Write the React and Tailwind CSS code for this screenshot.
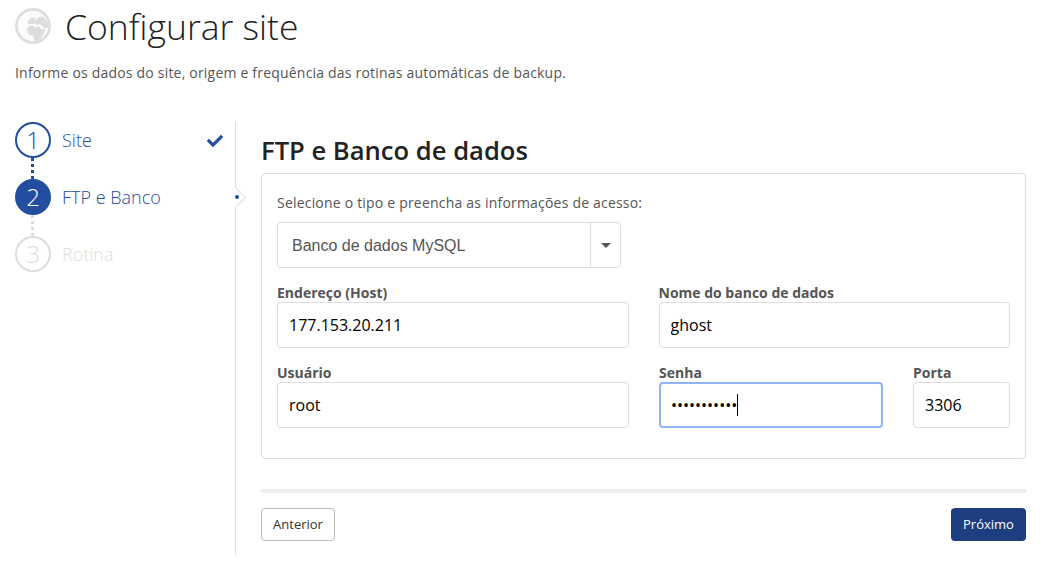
import React from 'react';
import { FaCheck } from 'react-icons/fa';

const steps = [
  { number: 1, label: 'Site', state: 'done' },
  { number: 2, label: 'FTP e Banco', state: 'active' },
  { number: 3, label: 'Rotina', state: 'todo' },
];

const GlobeIcon = () => (
  <svg viewBox="0 0 36 36" className="h-9 w-9 shrink-0">
    <circle cx="18" cy="18" r="16.6" fill="#fbfbfb" stroke="#dddddd" strokeWidth="2.6" />
    <g fill="#dddddd" stroke="#dddddd" strokeWidth="1" strokeLinejoin="round">
      <path d="M13 13 L17 10 L20 10.5 L18 12.5 L21 13 L24 9.5 L28 9 L32 14 L33 19 L30 20 L27 17 L24 15.5 L22 16.5 L20 15 L16 15.5 L13.5 16 Z" />
      <path d="M12 21.5 L14.5 18.5 L18 18.5 L21 20 L24 19 L26 21.5 L30 22 L27.5 26.5 L26 30 L22 32.5 L20 32.5 L18.5 27 L14 26 Z" />
    </g>
  </svg>
);

const Step = ({ step, isLast }) => {
  const circle =
    step.state === 'active'
      ? 'bg-[#234ea0] border-[#234ea0] text-white'
      : step.state === 'done'
        ? 'bg-white border-[#234ea0] text-[#234ea0]'
        : 'bg-white border-[#dddddd] text-[#dddddd]';
  const label = step.state === 'todo' ? 'text-[#dddddd]' : 'text-[#234ea0]';
  const line = step.state === 'done' ? 'border-[#234ea0]' : 'border-[#dddddd]';

  return (
    <div className="relative flex h-[57px] items-start">
      <div className={`flex h-9 w-9 shrink-0 items-center justify-center rounded-full border-2 text-2xl font-light ${circle}`}>
        {step.number}
      </div>
      <span className={`ml-[11px] mt-[6px] text-[18px] leading-6 font-light ${label}`}>{step.label}</span>
      {step.state === 'done' && <FaCheck className="absolute left-[192px] top-[11px] text-[16px] text-[#234ea0]" />}
      {!isLast && <div className={`absolute left-[16px] top-9 h-[21px] border-l-[3px] border-dotted ${line}`}></div>}
    </div>
  );
};

const Field = ({ label, value, type = 'text', className = '', focused = false }) => (
  <div className={className}>
    <label className="block h-[19px] text-[14px] leading-[19px] font-bold text-[#555555]">{label}</label>
    <div className="relative">
      <input
        type={type}
        value={value}
        readOnly
        className={`h-[46px] w-full rounded bg-white text-[16px] text-black outline-none ${focused ? 'border-2 border-[#8fb5f3] px-[10px]' : 'border border-[#dddddd] px-[11px]'}`}
      />
      {focused && <span className="absolute left-[78px] top-[12px] h-[22px] w-px bg-black"></span>}
    </div>
  </div>
);

export default function App() {
  return (
    <div className="h-[568px] w-[1053px] overflow-hidden bg-white font-['Open_Sans',sans-serif] text-[#444444]">
      <header className="px-[15px] pt-2">
        <div className="flex h-9 items-center">
          <GlobeIcon />
          <h1 className="ml-[14px] text-[35.5px] leading-9 font-light text-[#222222]">Configurar site</h1>
        </div>
        <p className="mt-[19px] text-[14px] leading-5 tracking-[0.2px] text-[#555555]">
          Informe os dados do site, origem e frequência das rotinas automáticas de backup.
        </p>
      </header>

      <div className="mt-[39px] flex px-[15px]">
        <aside className="relative h-[433px] w-[221px] border-r border-[#dddddd]">
          {steps.map((step, index) => (
            <Step key={step.number} step={step} isLast={index === steps.length - 1} />
          ))}
          <div className="absolute left-[213px] top-[68px] h-[15px] w-[15px] rotate-45 border-t border-r border-[#dddddd] bg-white"></div>
          <div className="absolute left-[220px] top-[73px] h-1 w-1 rounded-full bg-[#234ea0]"></div>
        </aside>

        <main className="ml-[25px] w-[765px]">
          <h2 className="mt-[14px] text-[25.6px] leading-[30px] font-semibold text-[#222222]">FTP e Banco de dados</h2>
          <section className="mt-[7px] h-[286px] rounded border border-[#dddddd] px-[15px] pt-[19px]">
            <p className="text-[14px] leading-[20px] tracking-[0.2px] text-[#555555]">Selecione o tipo e preencha as informações de acesso:</p>
            <div className="mt-[9px] flex h-[46px] w-[344px] items-center rounded border border-[#dddddd]">
              <span className="flex-1 pl-[14px] pt-[2px] font-['Liberation_Sans',sans-serif] text-[16px] text-[#555555]">Banco de dados MySQL</span>
              <span className="flex h-full w-[30px] items-center justify-center border-l border-[#dddddd]">
                <span className="border-x-[5px] border-t-[5px] border-x-transparent border-t-[#555555]"></span>
              </span>
            </div>
            <div className="mt-[15px] flex gap-[29.5px]">
              <Field label="Endereço (Host)" value="177.153.20.211" className="w-[352px]" />
              <Field label="Nome do banco de dados" value="ghost" className="w-[351.5px]" />
            </div>
            <div className="mt-[15px] flex">
              <Field label="Usuário" value="root" className="w-[352px]" />
              <Field label="Senha" value="ghostpass12" type="password" focused className="ml-[30px] w-[224px]" />
              <Field label="Porta" value="3306" className="ml-[30px] w-[97px]" />
            </div>
          </section>
          <div className="mt-[30px] h-1 bg-[#eeeeee]"></div>
          <div className="mt-[15px] flex justify-between">
            <button className="h-[33px] w-[74px] rounded border border-[#bbbbbb] bg-white text-[13px] text-[#333333]">Anterior</button>
            <button className="h-[33px] w-[75px] rounded bg-[#1d3e80] text-[13px] text-white">Próximo</button>
          </div>
        </main>
      </div>
    </div>
  );
}
